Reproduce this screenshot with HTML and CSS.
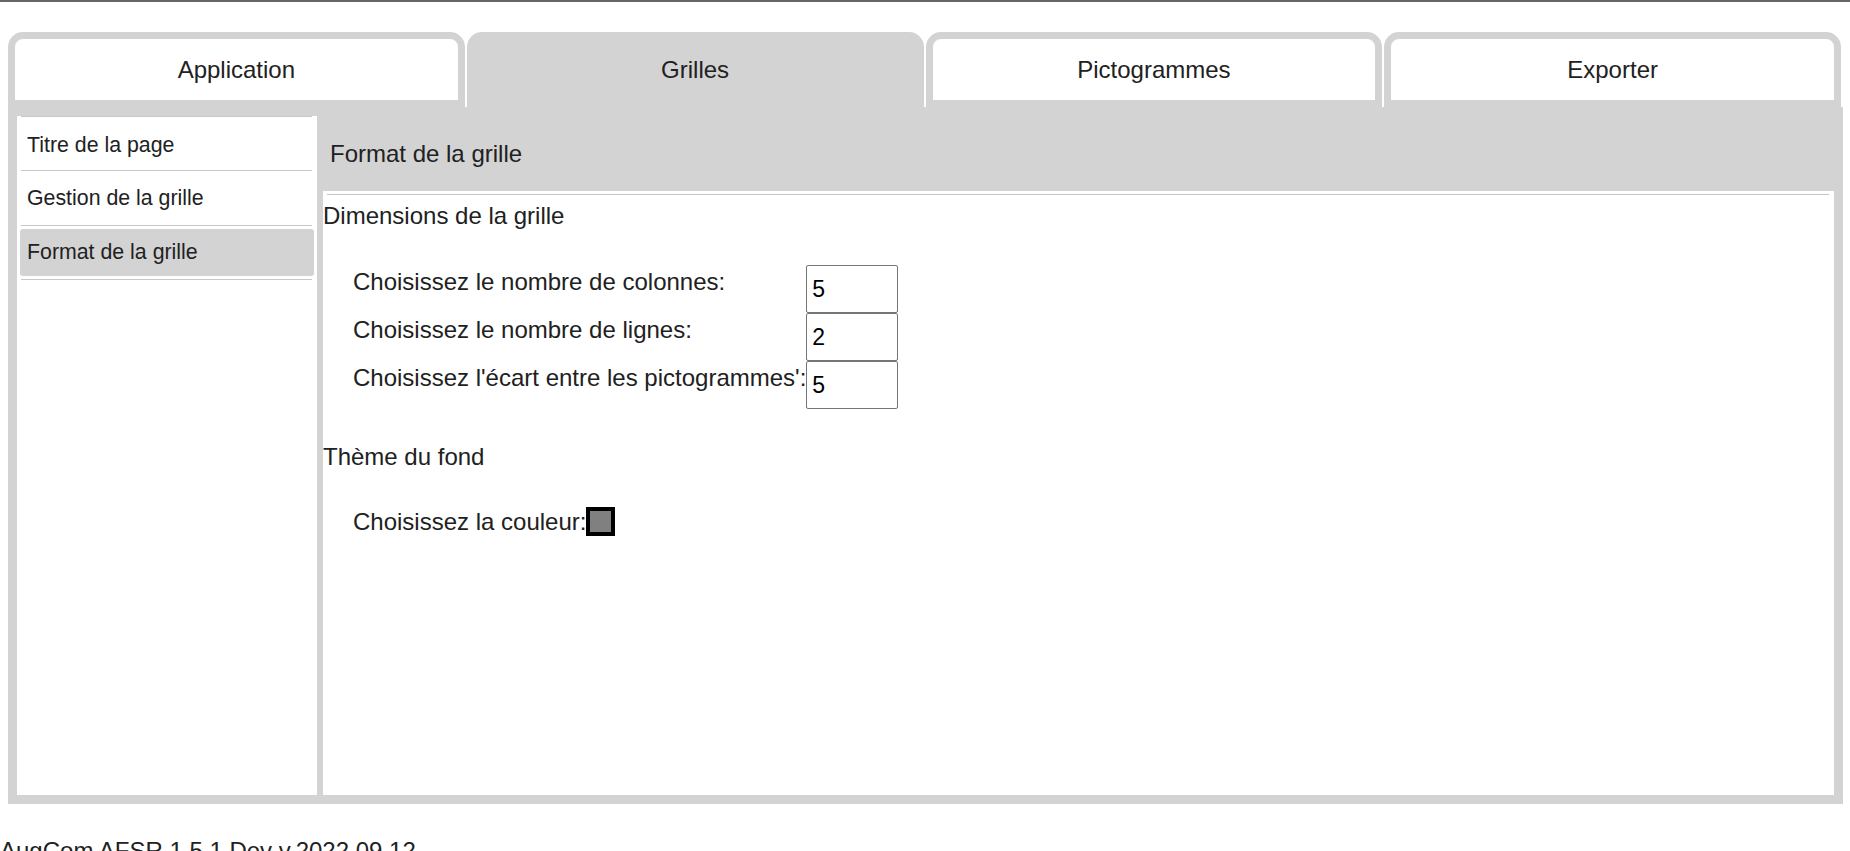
FILE: index.html
```html
<!DOCTYPE html>
<html lang="fr">
<head>
<meta charset="utf-8">
<title>AugCom</title>
<link rel="stylesheet" href="styles.css">
</head>
<body>
<div class="topbar"></div>
<div class="app">
  <nav class="tabs">
    <div class="tab"><span class="tab-inner">Application</span></div>
    <div class="tab active"><span class="tab-inner">Grilles</span></div>
    <div class="tab"><span class="tab-inner">Pictogrammes</span></div>
    <div class="tab"><span class="tab-inner">Exporter</span></div>
  </nav>
  <div class="panel">
    <aside class="sidebar">
      <ul class="menu">
        <li class="menu-item"><div class="menu-label first">Titre de la page</div></li>
        <li class="menu-item"><div class="menu-label">Gestion de la grille</div></li>
        <li class="menu-item"><div class="menu-label selected">Format de la grille</div></li>
      </ul>
    </aside>
    <main class="main">
      <div class="main-header">Format de la grille</div>
      <div class="main-body">
        <div class="rule"></div>
        <div class="section-title">Dimensions de la grille</div>
        <div class="fields">
          <label class="field-label">Choisissez le nombre de colonnes:</label>
          <input class="field-input" type="text" value="5">
          <label class="field-label">Choisissez le nombre de lignes:</label>
          <input class="field-input" type="text" value="2">
          <label class="field-label">Choisissez l'écart entre les pictogrammes':</label>
          <input class="field-input" type="text" value="5">
        </div>
        <div class="section-title second">Thème du fond</div>
        <div class="color-row">
          <span class="color-label">Choisissez la couleur:</span>
          <span class="swatch"></span>
        </div>
      </div>
    </main>
  </div>
</div>
<footer class="footer">AugCom AFSR 1.5.1 Dev v.2022.09.12</footer>
</body>
</html>
```

FILE: styles.css
```css
html, body {
  margin: 0;
  padding: 0;
  background: #ffffff;
}

body {
  font-family: "Liberation Sans", Arial, sans-serif;
  color: #212121;
  font-size: 24px;
  line-height: 1.15;
}

.topbar {
  height: 2px;
  background: #666666;
}

.app {
  margin: 30px 7px 0 8px;
}

.tabs {
  display: flex;
  gap: 2px;
  margin-right: 2px;
}

.tab {
  flex: 1 1 0;
  border: 7px solid #d3d3d3;
  border-radius: 15px 15px 0 0;
  background: #ffffff;
  height: 61px;
  display: flex;
  align-items: center;
  justify-content: center;
  font-size: 24px;
}

.tab.active {
  background: #d3d3d3;
}

.panel {
  background: #d3d3d3;
  padding: 9px;
  display: flex;
  gap: 6px;
  height: 679px;
}

.sidebar {
  width: 300px;
  flex: none;
  background: #ffffff;
  padding: 0 5px 0 4px;
  box-sizing: border-box;
}

.menu {
  list-style: none;
  margin: 0;
  padding: 0;
  border-top: 1px solid #c8c8c8;
}

.menu-item {
  height: 53.3px;
  border-bottom: 1px solid #c8c8c8;
  display: flex;
  align-items: center;
}

.menu-label {
  flex: 1;
  height: 47px;
  margin: 0 -2px 0 -1px;
  padding-left: 7px;
  display: flex;
  align-items: center;
  font-size: 21.33px;
  border-radius: 3px;
}

.menu-label.first {
  margin-top: 4px;
}

.menu-label.selected {
  background: #d3d3d3;
}

.main {
  flex: 1;
  display: flex;
  flex-direction: column;
  min-width: 0;
}

.main-header {
  height: 75px;
  display: flex;
  align-items: center;
  padding-left: 7px;
  font-size: 24px;
}

.main-body {
  flex: 1;
  background: #ffffff;
  padding-top: 3px;
}

.rule {
  margin: 0 5px 0 4px;
  border-top: 1px solid #c4c4c4;
}

.section-title {
  margin-top: 7px;
  font-size: 24px;
}

.section-title.second {
  margin-top: 34px;
}

.fields {
  margin: 35px 0 0 30px;
  display: grid;
  grid-template-columns: max-content 92px;
  grid-auto-rows: 48px;
  justify-content: start;
}

.field-label {
  padding-top: 3.5px;
  font-size: 24px;
}

.field-input {
  box-sizing: border-box;
  width: 92px;
  height: 48px;
  border: 1px solid #767676;
  border-radius: 2px;
  padding: 1px 5px 0 5px;
  margin: 0;
  font-family: "Liberation Sans", Arial, sans-serif;
  font-size: 23px;
  color: #000000;
  background: #ffffff;
}

.color-row {
  margin: 37px 0 0 30px;
  display: flex;
  align-items: center;
}

.color-label {
  font-size: 24px;
}

.swatch {
  width: 29px;
  height: 29px;
  box-sizing: border-box;
  border: 4px solid #000000;
  background: #808080;
}

.footer {
  margin-top: 33px;
  font-size: 24px;
}
```
